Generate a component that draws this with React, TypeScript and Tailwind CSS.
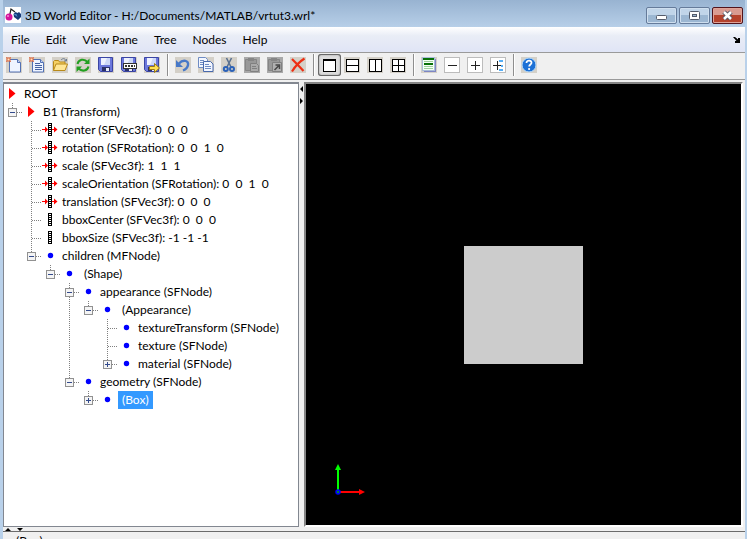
import type { ReactNode } from "react";
import clsx from "clsx";

const MENU_ITEMS = ["File", "Edit", "View Pane", "Tree", "Nodes", "Help"];

type Marker = "arrow" | "exposed" | "field" | "dot";

// Guides, one letter per column: "." blank, "|" line, "t" branch,
// "m" open node (last), "M" open node (more below), "p" closed node (last)
type TreeRowData = {
  guides: string;
  marker: Marker;
  label: string;
  node?: boolean;
  selected?: boolean;
};

const TREE_ROWS: TreeRowData[] = [
  { guides: "", marker: "arrow", label: "ROOT" },
  { guides: "m", marker: "arrow", label: "B1 (Transform)" },
  { guides: ".t", marker: "exposed", label: "center (SFVec3f): 0  0  0" },
  { guides: ".t", marker: "exposed", label: "rotation (SFRotation): 0  0  1  0" },
  { guides: ".t", marker: "exposed", label: "scale (SFVec3f): 1  1  1" },
  { guides: ".t", marker: "exposed", label: "scaleOrientation (SFRotation): 0  0  1  0" },
  { guides: ".t", marker: "exposed", label: "translation (SFVec3f): 0  0  0" },
  { guides: ".t", marker: "field", label: "bboxCenter (SFVec3f): 0  0  0" },
  { guides: ".t", marker: "field", label: "bboxSize (SFVec3f): -1 -1 -1" },
  { guides: ".m", marker: "dot", label: "children (MFNode)" },
  { guides: "..m", marker: "dot", label: "(Shape)", node: true },
  { guides: "...M", marker: "dot", label: "appearance (SFNode)" },
  { guides: "...|m", marker: "dot", label: "(Appearance)", node: true },
  { guides: "...|.t", marker: "dot", label: "textureTransform (SFNode)" },
  { guides: "...|.t", marker: "dot", label: "texture (SFNode)" },
  { guides: "...|.p", marker: "dot", label: "material (SFNode)" },
  { guides: "...m", marker: "dot", label: "geometry (SFNode)" },
  { guides: "....p", marker: "dot", label: "(Box)", node: true, selected: true },
];

function Guide({ kind }: { kind: string }) {
  const open = kind === "m" || kind === "M";
  const toggle = open || kind === "p";
  const drawing = (
    <svg width="19" height="18" viewBox="0 0 19 18" shapeRendering="crispEdges" className="block" aria-hidden>
      <g stroke="#808080" strokeDasharray="1 1" fill="none">
        {kind !== "." && <path d={kind === "m" || kind === "p" ? "M8.5 0V9" : "M8.5 0V18"} />}
        {kind !== "." && kind !== "|" && <path d="M9 9.5H18" />}
      </g>
      {toggle && (
        <>
          <rect x="4.5" y="5.5" width="8" height="8" fill="#f4f4f4" stroke="#919191" />
          <path d={open ? "M6 9.5H11" : "M6 9.5H11M8.5 7V12"} stroke="#334b8c" />
        </>
      )}
    </svg>
  );
  if (!toggle) return drawing;
  return (
    <button type="button" aria-label={open ? "Collapse" : "Expand"}>
      {drawing}
    </button>
  );
}

function MarkerIcon({ marker }: { marker: Marker }) {
  return (
    <svg width="19" height="18" viewBox="0 0 19 18" className="block shrink-0" aria-hidden>
      {marker === "arrow" && <path d="M5 3L11.5 8.5L5 14Z" fill="#f00" />}
      {marker === "dot" && <circle cx="8.5" cy="8.5" r="2.7" fill="#00f" />}
      {(marker === "exposed" || marker === "field") && (
        <g shapeRendering="crispEdges">
          <rect x="6" y="2" width="4" height="13" fill="#000" />
          <path d="M8 3V15" stroke="#fff" strokeWidth="2" strokeDasharray="1 1" />
        </g>
      )}
      {marker === "exposed" && (
        <path d="M0 8h3V5.500l3 3-3 3V9H0zM10 8h2V5.500l3.500 3-3.500 3V9h-2z" fill="#f00" />
      )}
    </svg>
  );
}

function TreeRow({ guides, marker, label, node, selected }: TreeRowData) {
  return (
    <li role="treeitem" aria-selected={!!selected} aria-level={guides.length + 1} className="flex h-[18px] items-center">
      {guides.split("").map((kind, i) => (
        <Guide key={i} kind={kind} />
      ))}
      <MarkerIcon marker={marker} />
      <span
        className={clsx(
          "whitespace-pre leading-[18px]",
          node ? "px-1" : "px-px",
          selected && "bg-[#3399ff] text-white"
        )}
      >
        {label}
      </span>
    </li>
  );
}

function Paper() {
  return (
    <>
      <path d="M3.5 2.5h8l3 3v9.500h-11z" fill="#eef4ff" stroke="#5271b4" />
      <path d="M11.5 2.5v3h3" fill="#c3d3f2" stroke="#5271b4" />
    </>
  );
}

function Spark() {
  return (
    <>
      <path d="M0 0l5 5M5 0L0 5" stroke="#e08a68" strokeWidth="1" />
      <rect x="1" y="1" width="3" height="3" fill="#ffe3c0" stroke="#d9603a" />
    </>
  );
}

function Floppy() {
  return (
    <>
      <path d="M.5 .5h14v14h-12l-2-2z" fill="#6c78dc" stroke="#3a45a4" />
      <path d="M3 1h9v7H3z" fill="#eef2ff" />
      <path d="M9 1h3v7H6z" fill="#cdd8f8" />
      <path d="M4 10h8v4H4z" fill="#2b3168" />
      <path d="M8 11h3v3H8z" fill="#e8ecf8" />
    </>
  );
}

function Pane({ children }: { children?: ReactNode }) {
  return (
    <g shapeRendering="crispEdges">
      <rect x="2.5" y="2.5" width="12" height="12" fill="#fff" stroke="#000" />
      {children}
    </g>
  );
}

function Plate({ children }: { children: ReactNode }) {
  return (
    <g shapeRendering="crispEdges">
      <rect x=".5" y=".5" width="15" height="15" fill="#fff" stroke="#bcbcbc" />
      {children}
    </g>
  );
}

const TOOL_GROUPS: { label: string; pressed?: boolean; disabled?: boolean; art: ReactNode }[][] = [
  [
    { label: "New", art: <><Paper /><Spark /></> },
    {
      label: "New from template",
      art: <><Paper /><path d="M6 6.5h5M6 8.5h7M6 10.5h7M6 12.5h7" stroke="#4763a4" /><Spark /></>,
    },
    {
      label: "Open",
      art: (
        <>
          <path d="M9 3c2-2 4-2 5 1m-2 0h2.500V2" fill="none" stroke="#6b7b92" />
          <path d="M1.500 13.500v-9l1-1h4l1 1.500h5.500v2" fill="#f5d063" stroke="#b98a1a" />
          <path d="M1.500 13.500l2.500-6.500h11.500l-2.500 6.500z" fill="#ffe694" stroke="#b98a1a" />
        </>
      ),
    },
    {
      label: "Reload",
      art: (
        <>
          <path d="M2.500 7C3.500 2.500 9 1 12.500 5M13.500 9.500C12.500 14 7 15 3.500 11.500" fill="none" stroke="#22a022" strokeWidth="2" />
          <path d="M14.500 1.500V7H9zM1.500 15V9.500H7z" fill="#22a022" />
        </>
      ),
    },
    { label: "Save", art: <Floppy /> },
    {
      label: "Save as",
      art: (
        <>
          <Floppy />
          <rect x="2.500" y="6.500" width="13" height="5" fill="#fff" stroke="#333" />
          <path d="M4 9h10" stroke="#333" strokeWidth="2" strokeDasharray="2 1" />
        </>
      ),
    },
    {
      label: "Export",
      art: <><Floppy /><path d="M5.500 9.500h5v-3l5 4.500-5 4.500v-3h-5z" fill="#ffe052" stroke="#9b7a15" /></>,
    },
  ],
  [
    {
      label: "Undo",
      art: (
        <>
          <path d="M4 6.500C8 2 14 3.500 13 8c-.5 3-2.500 4.500-5 5.500" fill="none" stroke="#4678c8" strokeWidth="2.400" />
          <path d="M1 3v7h7z" fill="#4678c8" />
        </>
      ),
    },
    {
      label: "Copy",
      art: (
        <>
          <path d="M.5 .5h7l2 2v8h-9z" fill="#f2f6ff" stroke="#6f8cc4" />
          <path d="M2 3.500h4M2 5.500h4M2 7.500h4" stroke="#6f8cc4" />
          <path d="M5.500 4.500h7l2.500 2.500v7.500h-9.500z" fill="#f2f6ff" stroke="#4869ac" />
          <path d="M7 7.500h4M7 9.500h6M7 11.500h6" stroke="#6f8cc4" />
        </>
      ),
    },
    {
      label: "Cut",
      art: (
        <>
          <path d="M5.500 1l4.500 9M10.500 1L6 10" stroke="#5b7190" strokeWidth="1.600" />
          <circle cx="4.800" cy="12" r="2" fill="none" stroke="#2c62b8" strokeWidth="2" />
          <circle cx="11" cy="12" r="2" fill="none" stroke="#2c62b8" strokeWidth="2" />
        </>
      ),
    },
    {
      label: "Paste",
      disabled: true,
      art: (
        <>
          <rect width="16" height="16" fill="#a8a8a8" />
          <path d="M1.500 2.500h11v11h-11z" fill="#989898" stroke="#858585" />
          <path d="M4 1h6v3H4z" fill="#858585" />
          <path d="M6.500 6.500h6l2 2v6h-8z" fill="#aaa" stroke="#808080" />
          <path d="M8 9.500h4M8 11.500h5" stroke="#808080" />
        </>
      ),
    },
    {
      label: "Paste as reference",
      disabled: true,
      art: (
        <>
          <rect width="16" height="16" fill="#a8a8a8" />
          <path d="M1.500 2.500h11v11h-11z" fill="#989898" stroke="#858585" />
          <path d="M4 1h6v3H4z" fill="#858585" />
          <path d="M5.500 5.500h9v9h-9z" fill="#b0b0b0" stroke="#808080" />
          <path d="M7.500 13l4-4M8.500 8h4v4" fill="none" stroke="#454545" strokeWidth="1.500" />
        </>
      ),
    },
    {
      label: "Delete",
      art: <path d="M2 2c3 3 7 7 11.500 12M14.500 1.500C9 5 5 9.500 2 14.500" fill="none" stroke="#ee2e12" strokeWidth="2.200" />,
    },
  ],
  [
    { label: "Single view", pressed: true, art: <Pane><path d="M2 3h13" stroke="#000" strokeWidth="2" /></Pane> },
    { label: "Stacked views", art: <Pane><path d="M3 8.500h12" stroke="#000" /></Pane> },
    { label: "Side by side views", art: <Pane><path d="M8.500 3v12" stroke="#000" /></Pane> },
    { label: "Four views", art: <Pane><path d="M8.500 3v12M3 8.500h12" stroke="#000" /></Pane> },
  ],
  [
    {
      label: "Properties",
      art: (
        <g shapeRendering="crispEdges">
          <path d="M3 14h11V2h1v13H3z" fill="#7f86c4" />
          <rect x="1.500" y=".5" width="12" height="13" fill="#f4fff4" stroke="#a9bcd8" />
          <path d="M2 2h11M3 7h9" stroke="#087008" strokeWidth="2" />
          <path d="M3 4.500h9M3 9.500h9M3 11.500h9" stroke="#9fce9f" />
        </g>
      ),
    },
    { label: "Collapse all", art: <Plate><path d="M4 8.500h9" stroke="#222" /></Plate> },
    { label: "Expand all", art: <Plate><path d="M4 8.500h9M8.500 4v9" stroke="#222" /></Plate> },
    {
      label: "Expand branch",
      art: (
        <Plate>
          <path d="M3 8.500h9M7.500 4v9" stroke="#222" />
          <path d="M9 4h4M9 13h4M11 8.500h2" stroke="#56aef5" strokeWidth="2" />
        </Plate>
      ),
    },
  ],
  [
    {
      label: "Help",
      art: (
        <>
          <circle cx="8" cy="8" r="7" fill="#1d71d6" stroke="#b9dcfa" />
          <path d="M5.500 6c0-3.500 5.500-3 5 0-.2 1.500-2.300 1.500-2.300 3.500" fill="none" stroke="#fff" strokeWidth="1.800" />
          <circle cx="8.100" cy="12" r="1.100" fill="#fff" />
        </>
      ),
    },
  ],
];

function Toolbar() {
  return (
    <div role="toolbar" className="flex h-[28px] shrink-0 items-start border-t border-b border-[#9a9a9a] bg-[#f0f0f0] pt-px">
      {TOOL_GROUPS.map((group, i) => (
        <div key={i} className="flex items-center">
          {i > 0 && <div className="mx-[3px] h-[22px] w-[2px] border-l border-[#8e8e8e] bg-white" />}
          {group.map(({ label, pressed, disabled, art }) => (
            <button
              key={label}
              type="button"
              aria-label={label}
              aria-pressed={pressed}
              disabled={disabled}
              className={clsx(
                "flex h-[22px] w-[23px] items-center pl-[3px]",
                pressed && "rounded-[3px] bg-[#dedede] shadow-[inset_0_0_0_1px_#686868,inset_0_0_2px_1px_#999]"
              )}
            >
              <svg
                width="16"
                height="16"
                viewBox="0 0 16 16"
                aria-hidden
                className={clsx("block shrink-0", !pressed && "bg-[#d4d0c8]")}
              >
                {art}
              </svg>
            </button>
          ))}
        </div>
      ))}
    </div>
  );
}

function WindowButton({ label, close, children }: { label: string; close?: boolean; children: ReactNode }) {
  return (
    <button
      type="button"
      aria-label={label}
      className={clsx(
        "flex h-[17px] w-[31px] items-center justify-center rounded-[2px] border",
        close
          ? "border-[#52141c] bg-linear-to-b from-[#d99b91] from-50% to-[#b5422c] to-50% shadow-[inset_0_0_0_1px_#dfa398]"
          : "border-[#657b9a] bg-linear-to-b from-[#c1d5e9] from-50% to-[#9cb7d2] to-50% shadow-[inset_0_0_0_1px_#cfdfef]"
      )}
    >
      <svg width="15" height="11" viewBox="0 0 15 11" aria-hidden>
        {children}
      </svg>
    </button>
  );
}

function TitleBar() {
  return (
    <header className="flex h-[27px] shrink-0 items-start bg-linear-to-b from-[#98b3d1] to-[#b7cfe8] pt-[7px] pr-[2px] pl-[2px]">
      <svg width="16" height="16" viewBox="0 0 16 16" className="block bg-white" aria-hidden>
        <path d="M4.500 9L6 2l4 3" fill="none" stroke="#222" strokeWidth="1.200" />
        <circle cx="4" cy="10" r="3.500" fill="#d4149b" />
        <circle cx="3" cy="9" r="1" fill="#f38bd5" />
        <path d="M8.500 7l2-2 2 1 1.500-1 2 2v3l-3 3-4-3z" fill="#153a78" />
        <path d="M8.500 7l3 0 1 3z" fill="#4d8bc9" />
      </svg>
      <h1 className="ml-1 flex-1 truncate leading-[17px]">3D World Editor - H:/Documents/MATLAB/vrtut3.wrl*</h1>
      <div className="flex gap-[2px]">
        <WindowButton label="Minimize">
          <rect x="2.500" y="5.500" width="10" height="4" rx="1" fill="#fff" stroke="#555c6b" />
        </WindowButton>
        <WindowButton label="Maximize">
          <rect x="2.500" y="1.500" width="10" height="8" rx="1" fill="#fff" stroke="#555c6b" />
          <rect x="5.500" y="4.500" width="4" height="2" fill="#9cb7d2" stroke="#555c6b" />
        </WindowButton>
        <WindowButton label="Close" close>
          <path d="M4 2l7 7M11 2L4 9" stroke="#535666" strokeWidth="4.500" />
          <path d="M4 2l7 7M11 2L4 9" stroke="#fff" strokeWidth="2.500" />
        </WindowButton>
      </div>
    </header>
  );
}

function MenuBar() {
  return (
    <nav className="flex h-[25px] shrink-0 items-center justify-between bg-linear-to-b from-white via-[#e9edf6] via-35% to-[#e0e5f6] pr-[4px]">
      <div className="flex">
        {MENU_ITEMS.map((item) => (
          <button key={item} type="button" className="px-2 leading-[18px]">
            {item}
          </button>
        ))}
      </div>
      <button type="button" aria-label="Dock window">
        <svg width="8" height="6" viewBox="0 0 8 6" className="block" aria-hidden>
          <path d="M0 0h2l3 2.500V1h2v5H2V4h1.500z" fill="#000" />
        </svg>
      </button>
    </nav>
  );
}

function Viewport() {
  return (
    <main className="relative flex min-w-0 flex-1 items-center justify-center border-2 border-t-[#858585] border-r-white border-b-white border-l-[#858585] bg-black">
      <div className="h-[118px] w-[119px] bg-[#cccccc]" />
      <svg width="32" height="34" viewBox="0 0 32 34" className="absolute bottom-[28px] left-[27px]" aria-hidden>
        <path d="M5 28V6" stroke="#0f0" strokeWidth="2" />
        <path d="M5 1l3 6H2z" fill="#0f0" />
        <path d="M6 29H27" stroke="#f00" strokeWidth="2" />
        <path d="M32 29l-6-3v6z" fill="#f00" />
        <circle cx="5" cy="29" r="2" fill="#083" stroke="#00f" strokeWidth="1.500" />
      </svg>
    </main>
  );
}

export default function App() {
  return (
    <div className="flex h-screen flex-col overflow-hidden bg-[#b9d1ea] pr-[2px] pl-[3px] font-[Lato,sans-serif] text-[12px] text-black">
      <TitleBar />
      <MenuBar />
      <Toolbar />
      <div className="flex min-h-0 flex-1 bg-[#f0f0f0] pt-[2px] pr-[2px]">
        <aside className="w-[296px] shrink-0 overflow-hidden border border-t-2 border-[#828790] bg-white">
          <ul role="tree" aria-label="Scene tree" className="pt-px">
            {TREE_ROWS.map((row) => (
              <TreeRow key={row.label} {...row} />
            ))}
          </ul>
        </aside>
        <div className="w-[5px] shrink-0 pt-1">
          <svg width="5" height="18" viewBox="0 0 5 18" className="block" aria-hidden>
            <path d="M4 0v6L1 3zM1 12v6l3-3z" fill="#000" />
          </svg>
        </div>
        <Viewport />
      </div>
      <div className="h-[4px] shrink-0 bg-[#f0f0f0]">
        <svg width="24" height="4" viewBox="0 0 24 4" className="block" aria-hidden>
          <path d="M2 4h6L5 1zM14 1h6l-3 3z" fill="#000" />
        </svg>
      </div>
      <footer className="h-[8px] shrink-0 overflow-hidden border-t border-[#6b6b6b] bg-[#f0f0f0] pl-[13px] leading-[18px]">
        (Box)
      </footer>
    </div>
  );
}
